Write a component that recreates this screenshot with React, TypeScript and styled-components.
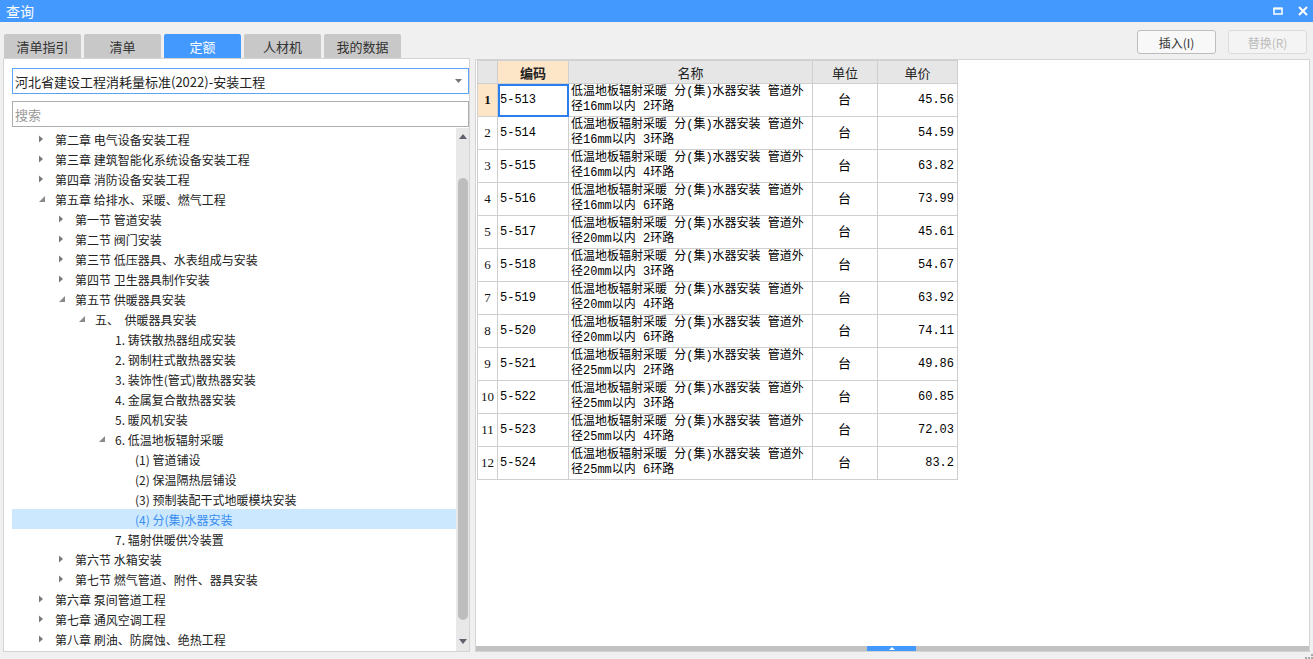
import React from 'react';
import styled, { createGlobalStyle } from 'styled-components';

// Page-wide reset
const GlobalStyle = createGlobalStyle`
  html, body {
    margin: 0;
    padding: 0;
    background: #f0f0f0;
    font-family: "Noto Sans CJK SC", "Noto Sans", sans-serif;
    color: #222;
  }
  * { box-sizing: border-box; }
`;

type TreeState = 'collapsed' | 'expanded' | 'leaf';

type TreeItem = {
  label: string;
  level: number;
  state: TreeState;
  selected?: boolean;
};

const treeItems: TreeItem[] = [
  { label: '第二章 电气设备安装工程', level: 0, state: 'collapsed' },
  { label: '第三章 建筑智能化系统设备安装工程', level: 0, state: 'collapsed' },
  { label: '第四章 消防设备安装工程', level: 0, state: 'collapsed' },
  { label: '第五章 给排水、采暖、燃气工程', level: 0, state: 'expanded' },
  { label: '第一节 管道安装', level: 1, state: 'collapsed' },
  { label: '第二节 阀门安装', level: 1, state: 'collapsed' },
  { label: '第三节 低压器具、水表组成与安装', level: 1, state: 'collapsed' },
  { label: '第四节 卫生器具制作安装', level: 1, state: 'collapsed' },
  { label: '第五节 供暖器具安装', level: 1, state: 'expanded' },
  { label: '五、  供暖器具安装', level: 2, state: 'expanded' },
  { label: '1. 铸铁散热器组成安装', level: 3, state: 'leaf' },
  { label: '2. 钢制柱式散热器安装', level: 3, state: 'leaf' },
  { label: '3. 装饰性(管式)散热器安装', level: 3, state: 'leaf' },
  { label: '4. 金属复合散热器安装', level: 3, state: 'leaf' },
  { label: '5. 暖风机安装', level: 3, state: 'leaf' },
  { label: '6. 低温地板辐射采暖', level: 3, state: 'expanded' },
  { label: '(1) 管道铺设', level: 4, state: 'leaf' },
  { label: '(2) 保温隔热层铺设', level: 4, state: 'leaf' },
  { label: '(3) 预制装配干式地暖模块安装', level: 4, state: 'leaf' },
  { label: '(4) 分(集)水器安装', level: 4, state: 'leaf', selected: true },
  { label: '7. 辐射供暖供冷装置', level: 3, state: 'leaf' },
  { label: '第六节 水箱安装', level: 1, state: 'collapsed' },
  { label: '第七节 燃气管道、附件、器具安装', level: 1, state: 'collapsed' },
  { label: '第六章 泵间管道工程', level: 0, state: 'collapsed' },
  { label: '第七章 通风空调工程', level: 0, state: 'collapsed' },
  { label: '第八章 刷油、防腐蚀、绝热工程', level: 0, state: 'collapsed' },
];

type Row = {
  code: string;
  pipe: string;
  loops: string;
  price: string;
};

const rows: Row[] = [
  { code: '5-513', pipe: '16', loops: '2', price: '45.56' },
  { code: '5-514', pipe: '16', loops: '3', price: '54.59' },
  { code: '5-515', pipe: '16', loops: '4', price: '63.82' },
  { code: '5-516', pipe: '16', loops: '6', price: '73.99' },
  { code: '5-517', pipe: '20', loops: '2', price: '45.61' },
  { code: '5-518', pipe: '20', loops: '3', price: '54.67' },
  { code: '5-519', pipe: '20', loops: '4', price: '63.92' },
  { code: '5-520', pipe: '20', loops: '6', price: '74.11' },
  { code: '5-521', pipe: '25', loops: '2', price: '49.86' },
  { code: '5-522', pipe: '25', loops: '3', price: '60.85' },
  { code: '5-523', pipe: '25', loops: '4', price: '72.03' },
  { code: '5-524', pipe: '25', loops: '6', price: '83.2' },
];

const tabs = ['清单指引', '清单', '定额', '人材机', '我的数据'];

const BLUE = '#4499ff';

const Window = styled.div`
  width: 1313px;
  height: 659px;
  display: flex;
  flex-direction: column;
  overflow: hidden;
  background: #f0f0f0;
`;

const TitleBar = styled.div`
  height: 22px;
  flex: none;
  background: ${BLUE};
  display: flex;
  align-items: center;
  padding: 0 5px 0 6px;
  color: #fff;
  font-size: 14px;
`;

const Title = styled.div`
  flex: 1;
`;

const TitleButtons = styled.div`
  display: flex;
  align-items: center;
  gap: 15px;
`;

const Toolbar = styled.div`
  height: 36px;
  flex: none;
  display: flex;
  align-items: flex-start;
  justify-content: space-between;
  padding: 0 6px 0 4px;
`;

const Tabs = styled.div`
  display: flex;
  gap: 3px;
  align-self: flex-end;
`;

const Tab = styled.div<{ $active?: boolean }>`
  width: 77px;
  height: 24px;
  display: flex;
  align-items: center;
  justify-content: center;
  font-size: 13px;
  border-radius: 2px 2px 0 0;
  background: ${p => (p.$active ? BLUE : '#c8c8c8')};
  color: ${p => (p.$active ? '#fff' : '#333')};
`;

const Buttons = styled.div`
  display: flex;
  gap: 12px;
  margin-top: 8px;
`;

const Button = styled.button<{ $disabled?: boolean }>`
  width: 79px;
  height: 24px;
  border-radius: 3px;
  border: 1px solid ${p => (p.$disabled ? '#dcdcdc' : '#bdbdbd')};
  background: ${p => (p.$disabled ? '#f4f4f4' : '#f8f8f8')};
  color: ${p => (p.$disabled ? '#bcbcbc' : '#333')};
  font-family: "Noto Sans CJK SC", "Noto Sans", sans-serif;
  font-size: 12px;
  padding: 0;
`;

const Main = styled.div`
  height: 594px;
  flex: none;
  display: flex;
  gap: 5px;
  padding: 0 3px;
`;

const LeftPanel = styled.div`
  width: 467px;
  display: flex;
  flex-direction: column;
  background: #fff;
  border: 1px solid #d4d4d4;
  padding: 9px 0 0 8px;
`;

const Select = styled.div`
  height: 26px;
  border: 1px solid #5aa3f5;
  display: flex;
  align-items: center;
  padding: 0 6px 0 2px;
  font-size: 13px;
  color: #222;
  justify-content: space-between;
`;

const SearchBox = styled.div`
  height: 26px;
  margin-top: 7px;
  border: 1px solid #adadad;
  display: flex;
  align-items: center;
  padding-left: 2px;
  font-size: 13px;
  color: #9a9a9a;
`;

const TreeArea = styled.div`
  flex: 1;
  display: flex;
  margin-top: 1px;
  min-height: 0;
`;

const TreeList = styled.div`
  flex: 1;
  padding-top: 1px;
  overflow: hidden;
`;

const TreeRow = styled.div<{ $level: number; $selected?: boolean }>`
  height: 20px;
  display: flex;
  align-items: center;
  padding-left: ${p => 26 + p.$level * 20}px;
  font-size: 12px;
  white-space: pre;
  background: ${p => (p.$selected ? '#cce8ff' : 'transparent')};
  color: ${p => (p.$selected ? '#3a8ef0' : '#222')};
`;

const Toggle = styled.span`
  width: 17px;
  flex: none;
  display: flex;
  align-items: center;
`;

const VScroll = styled.div`
  width: 13px;
  flex: none;
  background: #e8e8e8;
  display: flex;
  flex-direction: column;
  align-items: center;
  padding-bottom: 2px;
`;

const ScrollArrow = styled.div`
  height: 16px;
  flex: none;
  display: flex;
  align-items: center;
  justify-content: center;
`;

const VTrack = styled.div`
  flex: 1;
  display: flex;
  flex-direction: column;
`;

const VThumb = styled.div`
  width: 10px;
  height: 442px;
  margin-top: 34px;
  border-radius: 5px;
  background: #bdbdbd;
`;

const RightPanel = styled.div`
  flex: 1;
  display: flex;
  flex-direction: column;
  background: #fff;
  border: 1px solid #d4d4d4;
  margin-top: 1px;
`;

const GridArea = styled.div`
  flex: 1;
  padding: 0 0 0 1px;
  overflow: hidden;
`;

const Table = styled.table`
  border-collapse: collapse;
  table-layout: fixed;
  width: 480px;
`;

const Col = styled.col<{ $w: number }>`
  width: ${p => p.$w}px;
`;

const HeadCell = styled.th<{ $active?: boolean }>`
  height: 23px;
  padding: 0;
  border: 1px solid #cfcfcf;
  background: ${p => (p.$active ? '#fde5c7' : '#e6e6e6')};
  font-size: 13px;
  font-weight: ${p => (p.$active ? 700 : 400)};
  color: #222;
  text-align: center;
`;

const NumCell = styled.td<{ $active?: boolean }>`
  height: 33px;
  padding: 0;
  border: 1px solid #cfcfcf;
  background: ${p => (p.$active ? '#fde5c7' : '#fff')};
  font-family: "Liberation Serif", serif;
  font-size: 13px;
  font-weight: ${p => (p.$active ? 700 : 400)};
  text-align: center;
  color: #111;
`;

const Cell = styled.td<{ $align?: 'left' | 'center' | 'right'; $selected?: boolean }>`
  height: 33px;
  padding: 0 3px 0 2px;
  border: 1px solid #cfcfcf;
  font-family: "Liberation Mono", "Noto Sans CJK SC", monospace;
  font-size: 12px;
  line-height: 15px;
  color: #000;
  white-space: pre-line;
  text-align: ${p => p.$align || 'left'};
  outline: ${p => (p.$selected ? '2px solid #2b7fec' : 'none')};
  outline-offset: -2px;
`;

const UnitText = styled.span`
  font-family: "Noto Sans CJK SC", sans-serif;
  font-size: 13px;
`;

const HScroll = styled.div`
  height: 5px;
  flex: none;
  background: #c2c2c2;
  display: flex;
`;

const HThumb = styled.div`
  width: 49px;
  margin-left: 391px;
  background: ${BLUE};
  display: flex;
  align-items: center;
  justify-content: center;
`;

const BottomStrip = styled.div`
  flex: 1;
  display: flex;
  justify-content: flex-end;
  align-items: flex-end;
`;

const Grip = styled.div`
  display: grid;
  grid-template-columns: repeat(3, 2px);
  gap: 1px;
`;

const GripDot = styled.span<{ $on?: boolean }>`
  width: 2px;
  height: 2px;
  background: ${p => (p.$on ? '#a8a8a8' : 'transparent')};
`;

const Triangle: React.FC<{ state: TreeState }> = ({ state }) => {
  if (state === 'collapsed') {
    return (
      <svg width="6" height="8" viewBox="0 0 6 8">
        <path d="M1 0.5 L5 4 L1 7.5 Z" fill="#7a7a7a" />
      </svg>
    );
  }
  if (state === 'expanded') {
    return (
      <svg width="8" height="8" viewBox="0 0 8 8">
        <path d="M7 1 L7 7 L1 7 Z" fill="#8a8a8a" />
      </svg>
    );
  }
  return null;
};

const App: React.FC = () => {
  return (
    <>
      <GlobalStyle />
      <Window>
        <TitleBar>
          <Title>查询</Title>
          <TitleButtons>
            <svg width="10" height="8" viewBox="0 0 10 8">
              <rect x="1" y="1.5" width="8" height="5.5" fill="none" stroke="#fff" strokeWidth="1.5" />
              <rect x="0.5" y="0.5" width="9" height="2" fill="#fff" />
            </svg>
            <svg width="10" height="10" viewBox="0 0 10 10">
              <path d="M1 1 L9 9 M9 1 L1 9" stroke="#fff" strokeWidth="2" />
            </svg>
          </TitleButtons>
        </TitleBar>

        <Toolbar>
          <Tabs>
            {tabs.map(t => (
              <Tab key={t} $active={t === '定额'}>
                {t}
              </Tab>
            ))}
          </Tabs>
          <Buttons>
            <Button>插入(I)</Button>
            <Button $disabled>替换(R)</Button>
          </Buttons>
        </Toolbar>

        <Main>
          <LeftPanel>
            <Select>
              <span>河北省建设工程消耗量标准(2022)-安装工程</span>
              <svg width="7" height="4" viewBox="0 0 7 4">
                <path d="M0 0 L7 0 L3.5 4 Z" fill="#777" />
              </svg>
            </Select>
            <SearchBox>搜索</SearchBox>
            <TreeArea>
              <TreeList>
                {treeItems.map(item => (
                  <TreeRow key={item.label} $level={item.level} $selected={item.selected}>
                    <Toggle>
                      <Triangle state={item.state} />
                    </Toggle>
                    {item.label}
                  </TreeRow>
                ))}
              </TreeList>
              <VScroll>
                <ScrollArrow>
                  <svg width="8" height="5" viewBox="0 0 8 5">
                    <path d="M0 5 L4 0 L8 5 Z" fill="#606070" />
                  </svg>
                </ScrollArrow>
                <VTrack>
                  <VThumb />
                </VTrack>
                <ScrollArrow>
                  <svg width="8" height="5" viewBox="0 0 8 5">
                    <path d="M0 0 L8 0 L4 5 Z" fill="#606070" />
                  </svg>
                </ScrollArrow>
              </VScroll>
            </TreeArea>
          </LeftPanel>

          <RightPanel>
            <GridArea>
              <Table>
                <colgroup>
                  <Col $w={20} />
                  <Col $w={71} />
                  <Col $w={244} />
                  <Col $w={65} />
                  <Col $w={80} />
                </colgroup>
                <thead>
                  <tr>
                    <HeadCell />
                    <HeadCell $active>编码</HeadCell>
                    <HeadCell>名称</HeadCell>
                    <HeadCell>单位</HeadCell>
                    <HeadCell>单价</HeadCell>
                  </tr>
                </thead>
                <tbody>
                  {rows.map((r, i) => (
                    <tr key={r.code}>
                      <NumCell $active={i === 0}>{i + 1}</NumCell>
                      <Cell $selected={i === 0}>{r.code}</Cell>
                      <Cell>
                        {`低温地板辐射采暖 分(集)水器安装 管道外\n径${r.pipe}mm以内 ${r.loops}环路`}
                      </Cell>
                      <Cell $align="center">
                        <UnitText>台</UnitText>
                      </Cell>
                      <Cell $align="right">{r.price}</Cell>
                    </tr>
                  ))}
                </tbody>
              </Table>
            </GridArea>
            <HScroll>
              <HThumb>
                <svg width="6" height="3" viewBox="0 0 6 3">
                  <path d="M0 3 L3 0 L6 3 Z" fill="#fff" />
                </svg>
              </HThumb>
            </HScroll>
          </RightPanel>
        </Main>

        <BottomStrip>
          <Grip>
            <GripDot />
            <GripDot />
            <GripDot $on />
            <GripDot $on />
            <GripDot $on />
            <GripDot $on />
          </Grip>
        </BottomStrip>
      </Window>
    </>
  );
};

export default App;
